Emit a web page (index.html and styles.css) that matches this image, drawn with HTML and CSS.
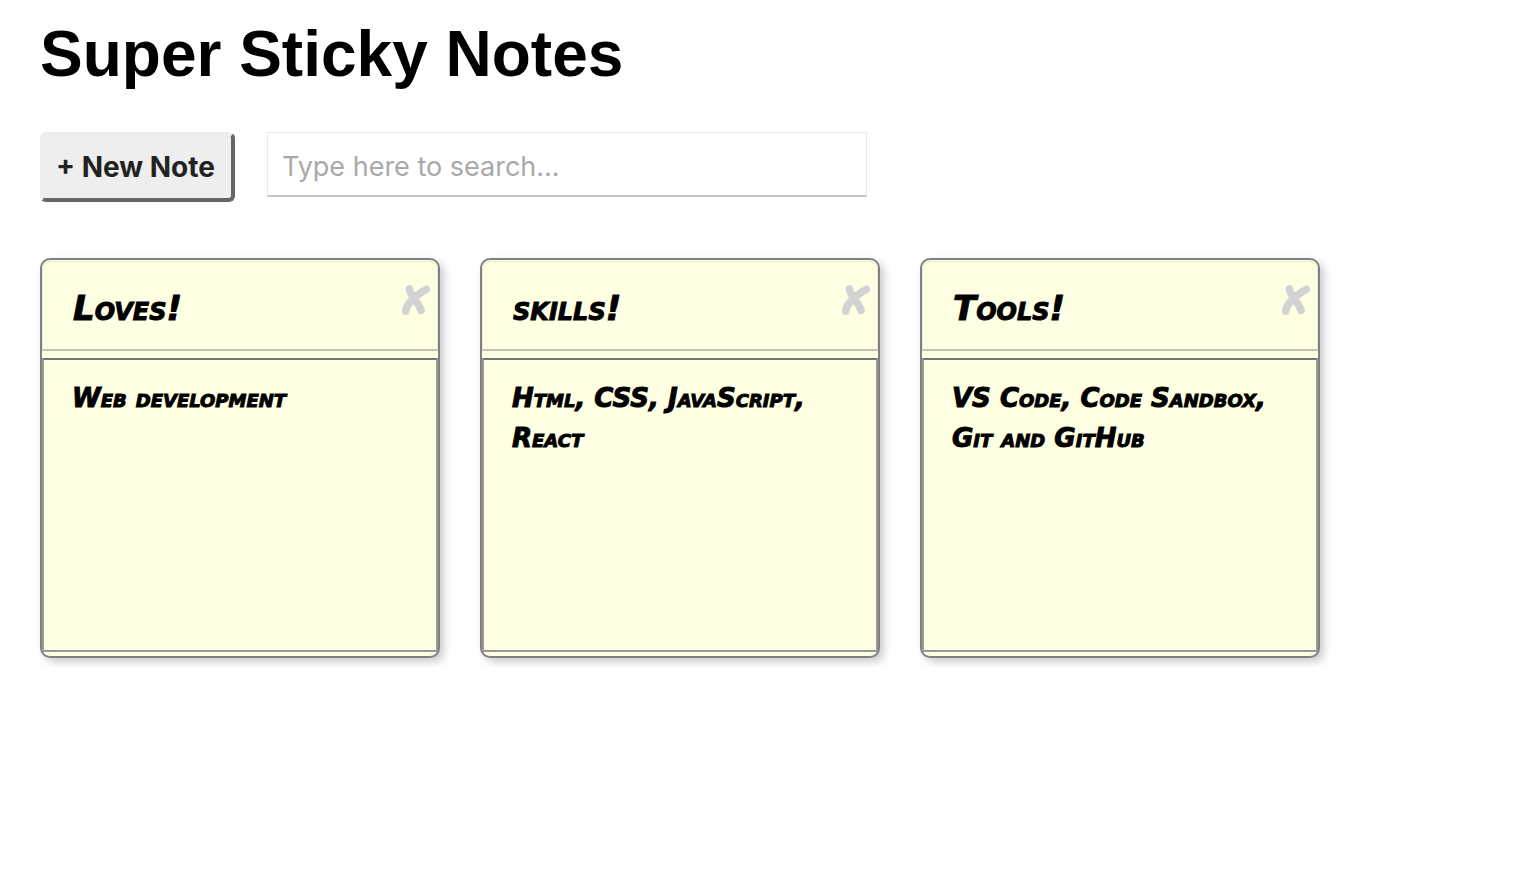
FILE: index.html
```
<!DOCTYPE html>
<html lang="en">
<head>
<meta charset="utf-8">
<meta name="viewport" content="width=device-width, initial-scale=1">
<title>Super Sticky Notes</title>
<link rel="stylesheet" href="styles.css">
</head>
<body>
<header class="header">
  <h1 class="header-title">Super Sticky Notes</h1>
  <div class="controls">
    <button class="add-new" type="button">+ New Note</button>
    <input class="search" type="text" placeholder="Type here to search..." aria-label="Search notes">
  </div>
</header>
<main>
  <ul class="notes-list">
    <li class="note">
      <input class="note-title" type="text" value="Loves!" aria-label="Note title">
      <textarea class="note-description" aria-label="Note description" spellcheck="false">Web development</textarea>
      <button class="note-delete" type="button" aria-label="Delete note"><svg viewBox="0 0 84 90"><path d="M22 12C25 32 48 50 57 76M73 13C50 26 16 48 11 78"/></svg></button>
    </li>
    <li class="note">
      <input class="note-title" type="text" value="skills!" aria-label="Note title">
      <textarea class="note-description" aria-label="Note description" spellcheck="false">Html, CSS, JavaScript, React</textarea>
      <button class="note-delete" type="button" aria-label="Delete note"><svg viewBox="0 0 84 90"><path d="M22 12C25 32 48 50 57 76M73 13C50 26 16 48 11 78"/></svg></button>
    </li>
    <li class="note">
      <input class="note-title" type="text" value="Tools!" aria-label="Note title">
      <textarea class="note-description" aria-label="Note description" spellcheck="false">VS Code, Code Sandbox, Git and GitHub</textarea>
      <button class="note-delete" type="button" aria-label="Delete note"><svg viewBox="0 0 84 90"><path d="M22 12C25 32 48 50 57 76M73 13C50 26 16 48 11 78"/></svg></button>
    </li>
  </ul>
</main>
</body>
</html>
```
FILE: styles.css
```
* {
  box-sizing: border-box;
}

body {
  margin: 0;
  padding: 16px 40px 40px;
  background: #fff;
  font-family: Inter, "Liberation Sans", sans-serif;
}

.header-title {
  margin: 0 0 40px;
  font: bold 64px/76px "Liberation Sans", Arial, sans-serif;
  color: #000;
}

.controls {
  display: flex;
  flex-wrap: wrap;
  align-items: flex-start;
  gap: 32px;
}

.add-new {
  padding: 13px 16px 13px 12px;
  border: 4px solid #666;
  border-top-color: #eee;
  border-left-color: #eee;
  border-radius: 6px;
  background: #eee;
  color: #222;
  font: 700 28px/36px Inter, sans-serif;
}

.search {
  width: 600px;
  max-width: 100%;
  height: 65px;
  padding: 4px 14px 0;
  border: 1px solid #e9e9e9;
  border-bottom: 2px solid #c4c4c4;
  background: #fff;
  font: 27px/36px Inter, sans-serif;
}

.search::placeholder {
  color: #a9a9a9;
}

.notes-list {
  display: flex;
  flex-wrap: wrap;
  gap: 40px;
  margin: 56px 0 0;
  padding: 0;
  list-style: none;
}

.note {
  position: relative;
  display: flex;
  flex-direction: column;
  gap: 7px;
  width: 400px;
  height: 400px;
  padding: 1px 0 4px;
  border: 2px solid #808080;
  border-radius: 10px;
  background: #ffffe3;
  box-shadow: 4px 4px 8px #ccc;
}

.note-title,
.note-description {
  width: 100%;
  margin: 0;
  background: transparent;
  color: #000;
  font-family: "DejaVu Sans", Verdana, sans-serif;
  font-style: italic;
  font-variant-caps: small-caps;
  -webkit-text-stroke: 1px #000;
}

.note-title {
  height: 90px;
  padding: 4px 60px 0 30px;
  border: 1px solid #e9e9cf;
  border-bottom: 2px solid #c4c4ae;
  border-radius: 8px 8px 0 0;
  font-size: 34px;
  font-weight: 700;
}

.note-description {
  flex: 1;
  padding: 18px 28px;
  border: 2px solid #999;
  border-top-color: #777;
  font-size: 26px;
  font-weight: 700;
  line-height: 40px;
  overflow: hidden;
  resize: none;
}

.note-delete {
  position: absolute;
  top: 25px;
  right: 8px;
  width: 28px;
  height: 30px;
  padding: 0;
  border: 0;
  background: none;
}

.note-delete svg {
  display: block;
  width: 28px;
  height: 30px;
  fill: none;
  stroke: #d3d3d3;
  stroke-width: 23;
  stroke-linecap: round;
}
```
